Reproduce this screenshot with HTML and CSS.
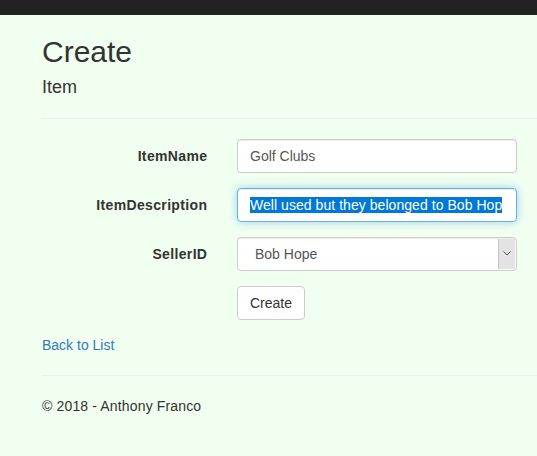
FILE: index.html
```html
<!DOCTYPE html>
<html>
<head>
<meta charset="utf-8">
<title>Create</title>
<link rel="stylesheet" href="styles.css">
</head>
<body>
<div class="navbar"></div>
<div class="body-content">
  <h2 class="title">Create</h2>
  <div class="form-horizontal">
    <h4 class="subtitle">Item</h4>
    <hr class="rule">
    <div class="form-group">
      <label class="control-label">ItemName</label>
      <div class="field"><div class="form-control"><div class="value">Golf Clubs</div></div></div>
    </div>
    <div class="form-group">
      <label class="control-label">ItemDescription</label>
      <div class="field"><div class="form-control focused"><div class="value"><span class="selection">Well used but they belonged to Bob Hop</span></div></div></div>
    </div>
    <div class="form-group">
      <label class="control-label">SellerID</label>
      <div class="field">
        <div class="form-control select">
          <div class="select-value">Bob Hope</div>
          <div class="select-arrow">
            <svg width="8" height="5" viewBox="0 0 8 5"><path d="M0.5 0.5 L4 4 L7.5 0.5" fill="none" stroke="#555" stroke-width="1"/></svg>
          </div>
        </div>
      </div>
    </div>
    <div class="form-group">
      <div class="spacer"></div>
      <div class="field"><button class="btn">Create</button></div>
    </div>
  </div>
  <div class="back"><a href="#" class="link">Back to List</a></div>
  <hr class="rule">
  <footer class="footer"><p class="footer-text">© 2018 - Anthony Franco</p></footer>
</div>
</body>
</html>
```

FILE: styles.css
```css
html, body {
  margin: 0;
  padding: 0;
}
body {
  background: #f0fff0;
  font-family: "Liberation Sans", Arial, sans-serif;
  font-size: 14px;
  line-height: 20px;
  color: #333;
  overflow: hidden;
}
.navbar {
  height: 15px;
  background: #222;
}
.body-content {
  padding-left: 42px;
}
.title {
  margin: 20px 0 10px;
  font-size: 30px;
  line-height: 33px;
  font-weight: 500;
}
.subtitle {
  margin: 10px 0 10px;
  font-size: 18px;
  line-height: 19.8px;
  font-weight: 500;
}
.rule {
  margin: 20px 0;
  border: 0;
  border-top: 1px solid #eee;
  height: 0;
}
.form-group {
  display: grid;
  grid-template-columns: 165px 280px;
  column-gap: 30px;
  margin-bottom: 15px;
}
.control-label {
  padding-top: 7px;
  text-align: right;
  font-weight: bold;
  letter-spacing: 0.35px;
  margin-right: -0.35px;
}
.form-control {
  box-sizing: border-box;
  height: 34px;
  width: 280px;
  padding: 6px 12px;
  background: #fff;
  border: 1px solid #ccc;
  border-radius: 4px;
  box-shadow: inset 0 1px 1px rgba(0,0,0,.075);
  color: #555;
}
.value {
  overflow: hidden;
  white-space: nowrap;
}
.focused {
  border-color: #66afe9;
  box-shadow: inset 0 1px 1px rgba(0,0,0,.075), 0 0 8px rgba(102,175,233,.6);
}
.selection {
  background: #0078d7;
  color: #fff;
  letter-spacing: 0.05px;
}
.select {
  display: flex;
  padding: 0;
  overflow: hidden;
}
.select-value {
  flex: 1;
  padding: 6px 0 6px 17px;
}
.select-arrow {
  width: 16px;
  height: 30px;
  margin-top: 1px;
  margin-right: 1px;
  background: #e3e3e3;
  border-left: 1px solid #c4c4c4;
  display: flex;
  align-items: center;
  justify-content: center;
}
.btn {
  height: 34px;
  padding: 6px 12px;
  font-family: inherit;
  font-size: 14px;
  line-height: 20px;
  color: #333;
  background: #fff;
  border: 1px solid #ccc;
  border-radius: 4px;
}
.back {
  line-height: 20px;
}
.link {
  color: #337ab7;
  text-decoration: none;
}
.footer-text {
  margin: 0 0 10px;
  letter-spacing: 0.15px;
}
```
